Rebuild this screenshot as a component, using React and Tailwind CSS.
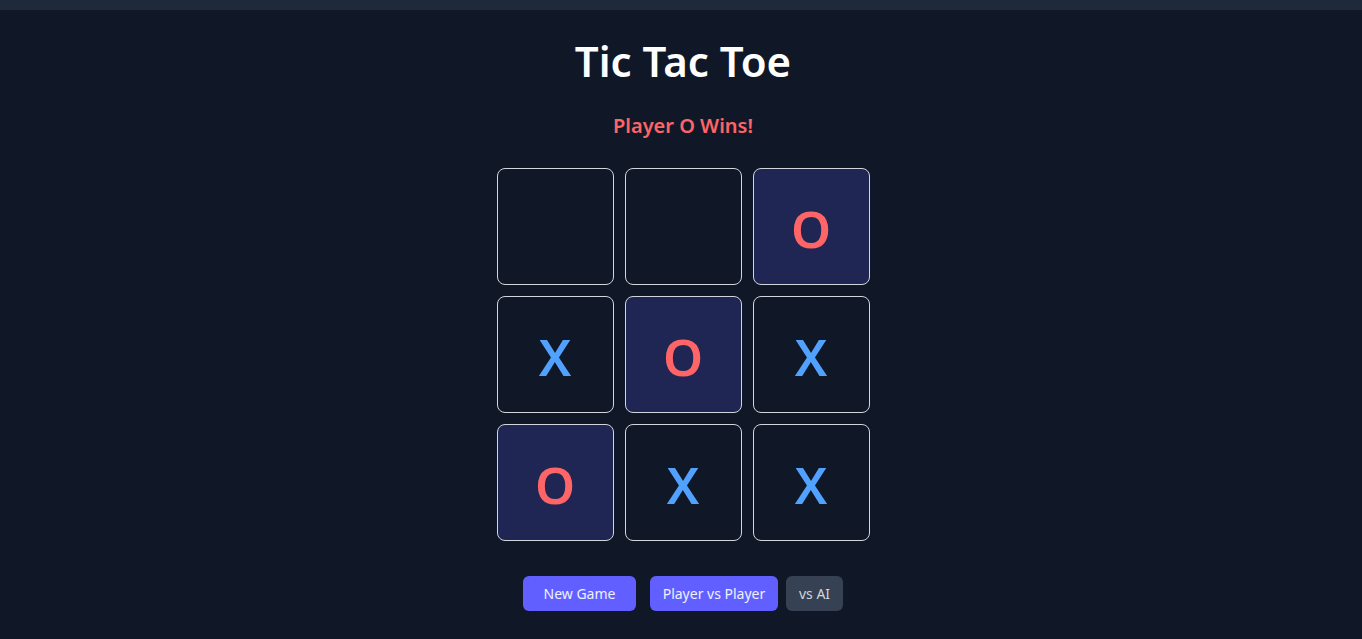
import React, { useState } from 'react'

const board = ['', '', 'O', 'X', 'O', 'X', 'O', 'X', 'X']
const winLine = [2, 4, 6]

const Cell = ({ value, win }) => {
  return (
    <button
      className={`w-[117px] h-[117px] rounded-lg border border-gray-300 flex items-center justify-center pt-[3px] text-[51px] font-semibold leading-none ${
        win ? 'bg-indigo-500/20' : 'bg-transparent'
      } ${value === 'X' ? 'text-blue-400' : 'text-red-400'}`}
    >
      {value}
    </button>
  )
}

const App = () => {
  const [mode, setMode] = useState('pvp')

  return (
    <div className="min-h-[639px] bg-gray-900 font-['Noto_Sans',sans-serif]">
      <div className="h-[10px] bg-gray-800" />
      <div className="flex flex-col items-center pl-1">
        <h1 className="mt-[31px] text-[42px] leading-[40px] font-semibold text-white">Tic Tac Toe</h1>
        <p className="mt-[31px] text-xl leading-[28px] font-semibold text-red-400">Player O Wins!</p>

        <div className="mt-[28px] grid grid-cols-3 gap-[11px]">
          {board.map((v, i) => (
            <Cell key={i} value={v} win={winLine.includes(i)} />
          ))}
        </div>

        <div className="mt-[35px] flex items-center">
          <button className="h-[35px] w-[113px] rounded-md bg-indigo-500 text-sm text-indigo-50">New Game</button>
          <div className="ml-[14px] flex gap-2">
            <button
              onClick={() => setMode('pvp')}
              className={`h-[35px] w-[128px] rounded-md text-sm ${mode === 'pvp' ? 'bg-indigo-500 text-indigo-50' : 'bg-gray-700 text-gray-300'}`}
            >
              Player vs Player
            </button>
            <button
              onClick={() => setMode('ai')}
              className={`h-[35px] w-[57px] rounded-md text-sm ${mode === 'ai' ? 'bg-indigo-500 text-indigo-50' : 'bg-gray-700 text-gray-300'}`}
            >
              vs AI
            </button>
          </div>
        </div>
      </div>
    </div>
  )
}

export default App
